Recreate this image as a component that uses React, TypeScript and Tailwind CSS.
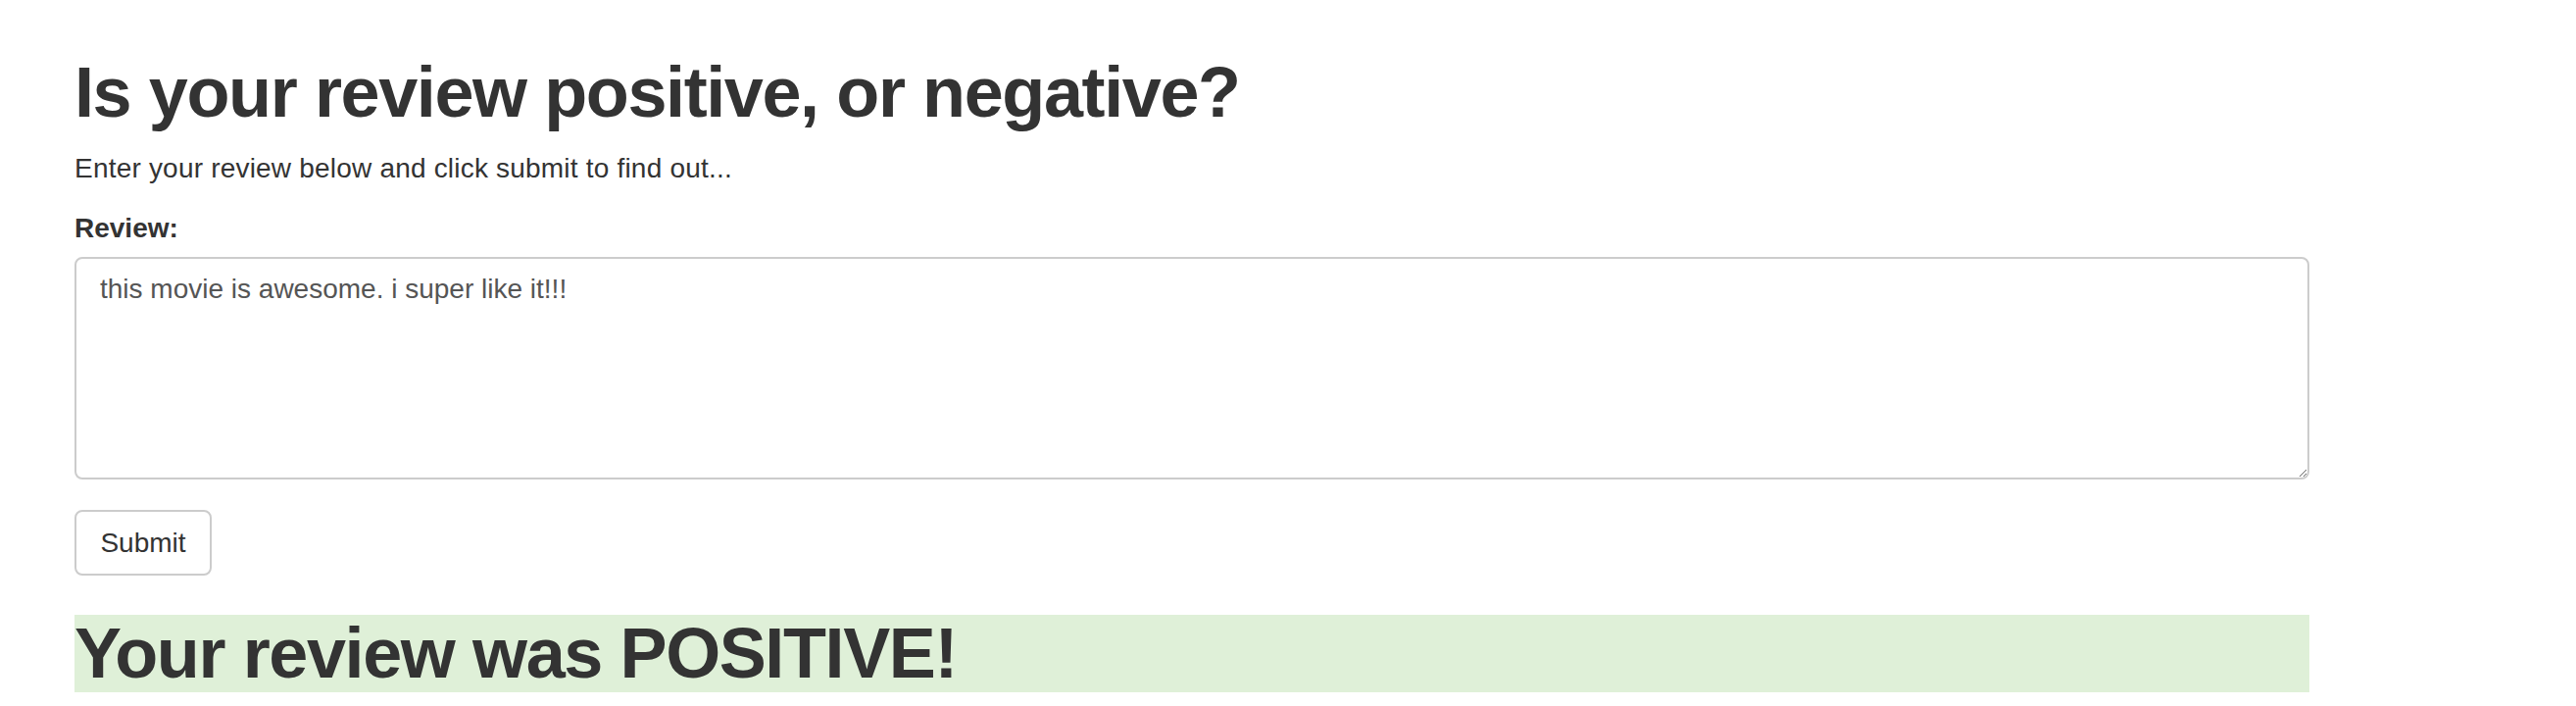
import React from 'react';

const App = () => {
  return (
    <div
      className="min-h-[720px] bg-white text-[#333333]"
      style={{ fontFamily: '"Liberation Sans", Arial, sans-serif' }}
    >
      <div className="ml-[76px] w-[2280px] flex flex-col pb-4">
        <h1 className="mt-[54px] text-[72px] leading-[80px] font-bold tracking-[-1.4px]">
          Is your review positive, or negative?
        </h1>
        <p className="mt-[18px] text-[28px] leading-[40px] tracking-[0.2px]">
          Enter your review below and click submit to find out...
        </p>

        <label htmlFor="review" className="mt-[21px] text-[28px] leading-[40px] font-bold">
          Review:
        </label>
        <textarea
          id="review"
          className="mt-[9px] h-[227px] w-full rounded-[8px] border-2 border-[#cccccc] pt-[11px] px-[24px] text-[28px] leading-[40px] text-[#555555] outline-none"
          defaultValue="this movie is awesome. i super like it!!!"
        />

        <div className="mt-[31px]">
          <button
            type="button"
            className="h-[67px] w-[140px] rounded-[8px] border-2 border-[#cccccc] bg-white text-[28px] leading-[40px] text-[#333333]"
          >
            Submit
          </button>
        </div>

        <h1 className="mt-[40px] h-[79px] bg-[#dff0d8] text-[72px] leading-[79px] font-bold tracking-[-1.4px]">
          Your review was POSITIVE!
        </h1>
      </div>
    </div>
  );
};

export default App;
